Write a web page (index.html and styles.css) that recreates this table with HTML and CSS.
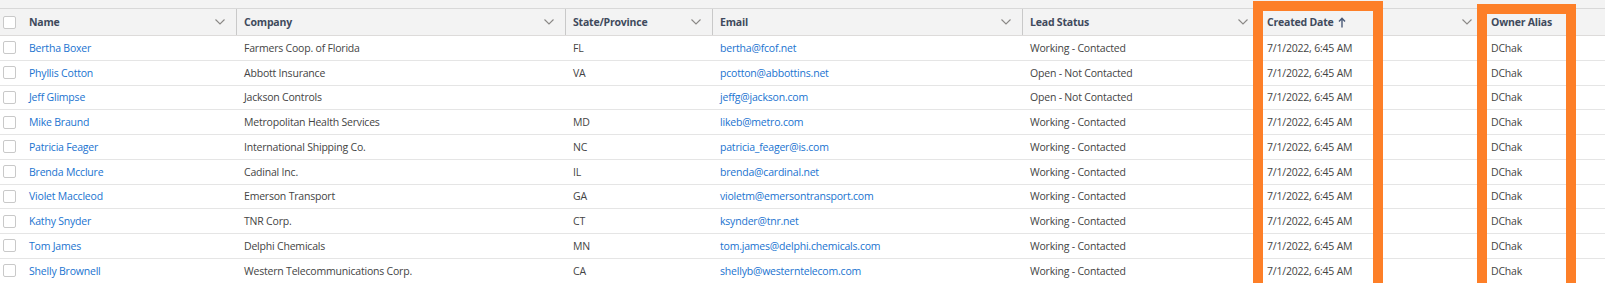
FILE: index.html
```html
<!DOCTYPE html>
<html lang="en">
<head>
<meta charset="utf-8">
<title>Leads</title>
<link rel="stylesheet" href="styles.css">
</head>
<body>
<div class="page">
  <div class="topbar"></div>
  <div class="grid">
    <div class="hcell hcheck"><span class="box"></span></div>
    <div class="hcell"><span class="label">Name</span><svg class="chev" viewBox="0 0 10 6"><path d="M0.5 0.5 L5 5 L9.5 0.5"/></svg></div>
    <div class="hcell"><span class="label">Company</span><svg class="chev" viewBox="0 0 10 6"><path d="M0.5 0.5 L5 5 L9.5 0.5"/></svg></div>
    <div class="hcell"><span class="label">State/Province</span><svg class="chev" viewBox="0 0 10 6"><path d="M0.5 0.5 L5 5 L9.5 0.5"/></svg></div>
    <div class="hcell"><span class="label">Email</span><svg class="chev" viewBox="0 0 10 6"><path d="M0.5 0.5 L5 5 L9.5 0.5"/></svg></div>
    <div class="hcell"><span class="label">Lead Status</span><svg class="chev" viewBox="0 0 10 6"><path d="M0.5 0.5 L5 5 L9.5 0.5"/></svg></div>
    <div class="hcell"><span class="label">Created Date <svg class="arrow" viewBox="0 0 8 11"><path d="M4 10.5 V1.5 M1 4.5 L4 1.2 L7 4.5"/></svg></span><svg class="chev" viewBox="0 0 10 6"><path d="M0.5 0.5 L5 5 L9.5 0.5"/></svg></div>
    <div class="hcell hlast"><span class="label">Owner Alias</span></div>
  </div>
  <div id="rows"></div>
  <div class="highlight hl-created"></div>
  <div class="highlight hl-owner"></div>
</div>
<script src="app.js"></script>
</body>
</html>
```
FILE: app.js
```js
const data = [
  ["Bertha Boxer","Farmers Coop. of Florida","FL","bertha@fcof.net","Working - Contacted"],
  ["Phyllis Cotton","Abbott Insurance","VA","pcotton@abbottins.net","Open - Not Contacted"],
  ["Jeff Glimpse","Jackson Controls","","jeffg@jackson.com","Open - Not Contacted"],
  ["Mike Braund","Metropolitan Health Services","MD","likeb@metro.com","Working - Contacted"],
  ["Patricia Feager","International Shipping Co.","NC","patricia_feager@is.com","Working - Contacted"],
  ["Brenda Mcclure","Cadinal Inc.","IL","brenda@cardinal.net","Working - Contacted"],
  ["Violet Maccleod","Emerson Transport","GA","violetm@emersontransport.com","Working - Contacted"],
  ["Kathy Snyder","TNR Corp.","CT","ksynder@tnr.net","Working - Contacted"],
  ["Tom James","Delphi Chemicals","MN","tom.james@delphi.chemicals.com","Working - Contacted"],
  ["Shelly Brownell","Western Telecommunications Corp.","CA","shellyb@westerntelecom.com","Working - Contacted"]
];
const rows = document.getElementById("rows");
for (const r of data) {
  const row = document.createElement("div");
  row.className = "grid row";
  row.innerHTML =
    '<div class="cell ccheck"><span class="box"></span></div>' +
    '<div class="cell"><a class="link" href="#">' + r[0] + '</a></div>' +
    '<div class="cell">' + r[1] + '</div>' +
    '<div class="cell">' + r[2] + '</div>' +
    '<div class="cell"><a class="link" href="#">' + r[3] + '</a></div>' +
    '<div class="cell">' + r[4] + '</div>' +
    '<div class="cell">7/1/2022, 6:45 AM</div>' +
    '<div class="cell">DChak</div>';
  rows.appendChild(row);
}
```
FILE: styles.css
```css
html, body {
  margin: 0;
  padding: 0;
  background: #ffffff;
}
body {
  font-family: "Open Sans", "Noto Sans", sans-serif;
  font-size: 10.5px;
  letter-spacing: -0.2px;
  color: #444444;
  overflow: hidden;
}
.page {
  position: relative;
  width: 1605px;
  height: 283px;
  overflow: hidden;
}
.topbar {
  height: 8px;
  background: #f3f3f3;
  border-bottom: 1px solid #d8d8d8;
}
.grid {
  display: grid;
  grid-template-columns: 22px 215px 329px 147px 310px 237px 224px 1fr;
  background: #f3f3f3;
  border-bottom: 1px solid #dddbda;
}
.hcell {
  height: 26px;
  display: flex;
  align-items: center;
  justify-content: space-between;
  padding: 0 7px 0 7px;
  border-right: 1px solid #c9c9c9;
  font-weight: 700;
  color: #3f4a5c;
}
.hcheck {
  border-right: none;
  padding: 0 0 0 3px;
  justify-content: flex-start;
}
.hlast { border-right: none; }
.label {
  display: flex;
  align-items: center;
  gap: 4px;
  white-space: nowrap;
}
.chev {
  width: 10px;
  height: 6px;
  fill: none;
  stroke: #8a8886;
  stroke-width: 1.1;
  margin-right: 4px;
}
.arrow {
  width: 8px;
  height: 11px;
  fill: none;
  stroke: #4a5a78;
  stroke-width: 1.4;
}
.box {
  display: block;
  width: 11px;
  height: 11px;
  border: 1px solid #c9c9c9;
  border-radius: 2px;
  background: #ffffff;
}
.row {
  background: #ffffff;
  border-bottom: 1px solid #e5e5e5;
  height: 24.75px;
  box-sizing: border-box;
}
.cell {
  display: flex;
  align-items: center;
  padding-left: 7px;
  white-space: nowrap;
  overflow: hidden;
}
.ccheck { padding-left: 3px; }
.link {
  color: #1a73d0;
  text-decoration: none;
}
.highlight {
  position: absolute;
  border: 10px solid #fd7f28;
  box-sizing: border-box;
}
.hl-created {
  left: 1253px;
  top: 1px;
  width: 130px;
  height: 300px;
}
.hl-owner {
  left: 1477px;
  top: 4px;
  width: 99px;
  height: 300px;
}
```
